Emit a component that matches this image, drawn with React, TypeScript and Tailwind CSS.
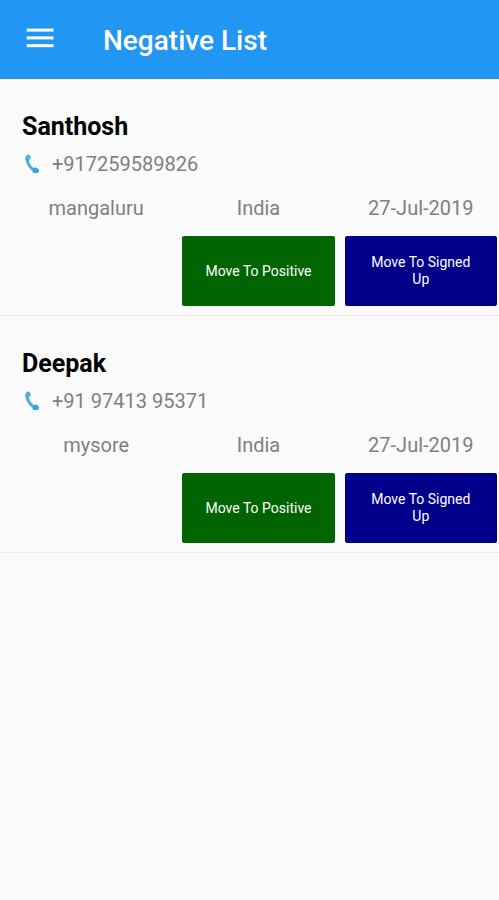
import React from "react";

type Contact = {
  name: string;
  phone: string;
  city: string;
  country: string;
  date: string;
};

const contacts: Contact[] = [
  { name: "Santhosh", phone: "+917259589826", city: "mangaluru", country: "India", date: "27-Jul-2019" },
  { name: "Deepak", phone: "+91 97413 95371", city: "mysore", country: "India", date: "27-Jul-2019" },
];

function MenuIcon() {
  return (
    <svg width="28" height="20" viewBox="0 0 28 20" fill="currentColor" aria-hidden="true">
      <rect x="0.7" y="0.6" width="26.8" height="3" />
      <rect x="0.7" y="8.4" width="26.8" height="3" />
      <rect x="0.7" y="16.2" width="26.8" height="3" />
    </svg>
  );
}

function PhoneIcon() {
  return (
    <svg width="16" height="20" viewBox="0 0 16 20" aria-hidden="true">
      <path
        d="M3.2 3.6C2.6 9 6.4 15 12 16.8"
        fill="none"
        stroke="#4bafd8"
        strokeWidth="3"
      />
      <path
        d="M2.4 1.4C3.2.3 4.8.1 5.7 1.2c1 1.2 1.3 2.9.7 3.8-.5.8-1.6.9-2.1 1.7L1.4 6.6C1 4.4 1.4 2.7 2.4 1.4Z"
        fill="#4bafd8"
      />
      <path
        d="M8.6 15.2c.9-.4 1.3-1.5 2.3-1.6 1.4-.1 3 .8 3.9 1.8.9 1.1.2 2.7-1 3.4-1.5.8-3.6.4-5.3-.6Z"
        fill="#3fa5d2"
      />
    </svg>
  );
}

function ContactItem({ contact }: { contact: Contact }) {
  return (
    <li className="border-b border-[#ebebeb] pt-8 pb-[9px]">
      <h2 className="px-[22px] text-[25px] leading-8 font-bold text-black">{contact.name}</h2>
      <a
        href={"tel:" + contact.phone.replace(/ /g, "")}
        className="mt-[7px] flex h-7 items-center gap-3 px-6 text-xl text-[#808080]"
      >
        <PhoneIcon />
        {contact.phone}
      </a>
      <div className="mt-4 grid grid-cols-3 gap-x-[10px] gap-y-[14px] pr-[2px] pl-5 text-center">
        <span className="text-xl leading-7 text-[#808080]">{contact.city}</span>
        <span className="text-xl leading-7 text-[#808080]">{contact.country}</span>
        <span className="text-xl leading-7 text-[#808080]">{contact.date}</span>
        <button
          type="button"
          className="col-start-2 h-[70px] rounded-xs bg-[#006400] px-5 text-sm leading-[17px] text-white"
        >
          Move To Positive
        </button>
        <button
          type="button"
          className="h-[70px] rounded-xs bg-[#00008b] px-5 text-sm leading-[17px] text-white"
        >
          Move To Signed Up
        </button>
      </div>
    </li>
  );
}

export default function App() {
  return (
    <div className="min-h-screen bg-[#fafafa] font-[Roboto,sans-serif]">
      <header className="flex h-[79px] items-start gap-[49px] border-b border-[#2a8be0] bg-[#2196f3] px-[26px] pt-[22px] text-white">
        <button type="button" aria-label="Open menu" className="flex h-8 items-center">
          <MenuIcon />
        </button>
        <h1 className="text-[28px] leading-[38px] font-medium">Negative List</h1>
      </header>
      <main>
        <ul>
          {contacts.map((contact) => (
            <ContactItem key={contact.name} contact={contact} />
          ))}
        </ul>
      </main>
    </div>
  );
}
